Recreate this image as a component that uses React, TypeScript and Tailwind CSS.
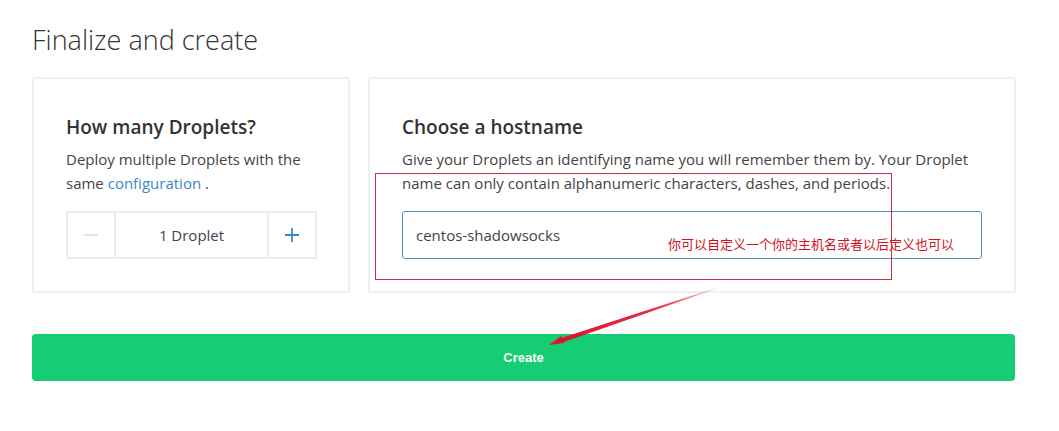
import React from 'react';

const font = { fontFamily: '"Open Sans", "Noto Sans CJK SC", sans-serif' };

export default function App() {
  return (
    <div className="relative w-[1059px] h-[431px] bg-white text-[#444]" style={font}>
      <div className="ml-8 w-[983px] pt-[21px]">
        <h1 className="text-[27px] font-light text-[#333] leading-[38px]">Finalize and create</h1>

        <div className="mt-[18px] flex gap-[18px]">
          {/* Droplet count */}
          <section className="w-[318px] h-[216px] border-2 border-[#f0f0f0] rounded-[3px] px-[32px] pt-[34px]">
            <h2 className="text-[19px] font-semibold text-[#333] leading-[28px]">How many Droplets?</h2>
            <p className="mt-[6px] text-[15px] leading-[24px] text-[#444]">
              Deploy multiple Droplets with the same <span className="text-[#3b87c9]">configuration</span> .
            </p>
            <div className="mt-[16px] flex h-[48px] w-[251px] border-2 border-[#ececec]">
              <button className="w-[48px] flex items-center justify-center border-r-2 border-[#ececec]">
                <svg width="16" height="16" viewBox="0 0 16 16"><path d="M1 8h14" stroke="#ddd" strokeWidth="1.6" /></svg>
              </button>
              <div className="flex-1 flex items-center justify-center text-[15px] text-[#444]">1 Droplet</div>
              <button className="w-[48px] flex items-center justify-center border-l-2 border-[#ececec]">
                <svg width="16" height="16" viewBox="0 0 16 16"><path d="M1 8h14M8 1v14" stroke="#3b87c9" strokeWidth="1.8" /></svg>
              </button>
            </div>
          </section>

          {/* Hostname */}
          <section className="flex-1 h-[216px] border-2 border-[#f0f0f0] rounded-[3px] px-[32px] pt-[34px]">
            <h2 className="text-[19px] font-semibold text-[#333] leading-[28px]">Choose a hostname</h2>
            <p className="mt-[6px] text-[15px] leading-[24px] text-[#444]">
              Give your Droplets an identifying name you will remember them by. Your Droplet name can only contain alphanumeric characters, dashes, and periods.
            </p>
            <div className="mt-[16px] h-[48px] w-[580px] border border-[#4a90cf] rounded-[3px] flex items-center px-[13px] text-[15px] text-[#444]">
              centos-shadowsocks
            </div>
          </section>
        </div>

        <button className="mt-[41px] w-full h-[47px] rounded-[4px] bg-[#15cd72] text-white text-[13px] font-bold" style={{ fontFamily: '"Liberation Sans", sans-serif' }}>
          Create
        </button>
      </div>

      {/* annotation overlay */}
      <div className="absolute left-[668px] top-[235px] text-[13px] leading-[18px] text-[#d0121b]" style={{ fontFamily: '"Noto Sans CJK SC", sans-serif' }}>
        你可以自定义一个你的主机名或者以后定义也可以
      </div>
      <svg className="absolute left-0 top-0 pointer-events-none" width="1059" height="431">
        <defs>
          <linearGradient id="arr" x1="720" y1="287" x2="548" y2="345" gradientUnits="userSpaceOnUse">
            <stop offset="0" stopColor="#e0102a" stopOpacity="0.05" />
            <stop offset="0.45" stopColor="#e0102a" stopOpacity="0.85" />
            <stop offset="1" stopColor="#e0102a" />
          </linearGradient>
        </defs>
        <rect x="375.5" y="173.5" width="516" height="106" fill="none" stroke="#c9303e" strokeWidth="1" />
        <path d="M720 287 L562 342 L560 339 Z" fill="url(#arr)" stroke="url(#arr)" strokeWidth="1.2" strokeLinejoin="round" />
        <path d="M549 345 L561 336 L564 343 Z" fill="#e0102a" />
      </svg>
    </div>
  );
}
